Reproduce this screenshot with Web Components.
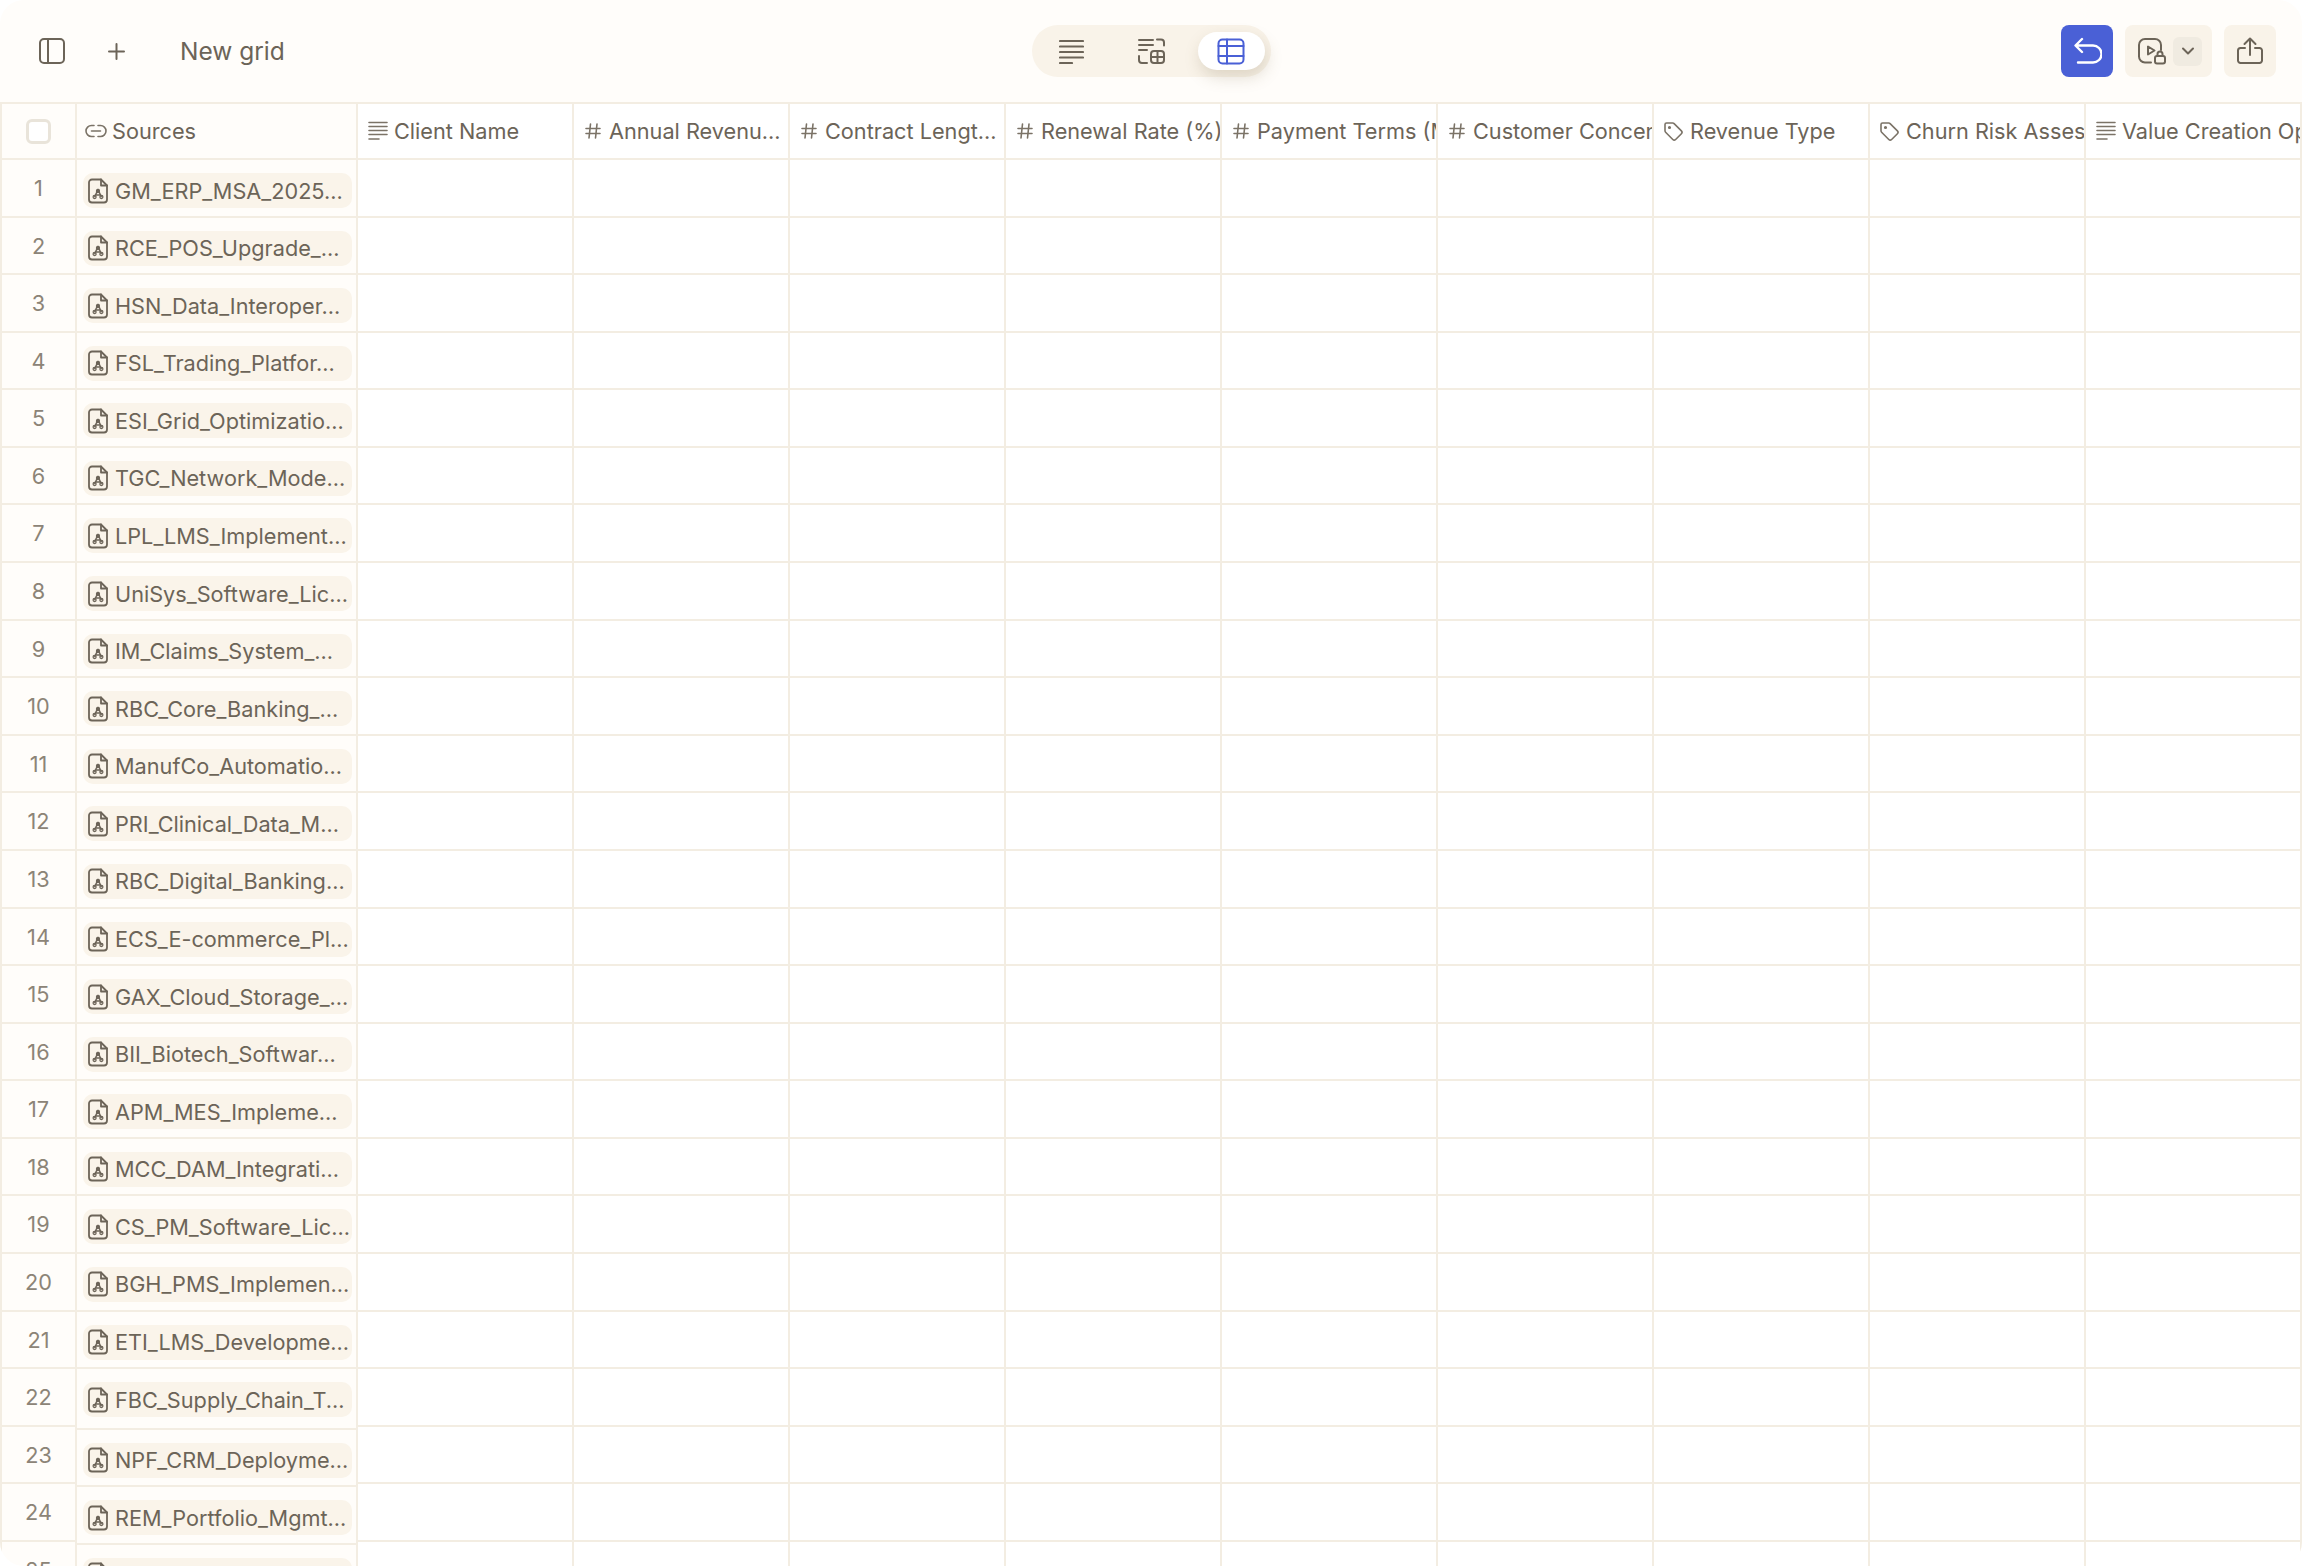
<!DOCTYPE html>
<html lang="en">
<head>
<meta charset="utf-8">
<title>New grid</title>
<style>
  html, body { margin: 0; padding: 0; background: #fff; overflow: hidden; }
  body { font-family: Inter, "Liberation Sans", sans-serif; color: #6c6458; }
</style>
</head>
<body>
<app-window>
  <tool-bar slot="top" title-text="New grid"></tool-bar>
  <grid-table></grid-table>
</app-window>

<script>
// icon strokes, all in the currentColor of the host
const ICONS = {
  sidebar: [28, 28, '<rect x="2" y="2" width="24" height="24" rx="4"/><path d="M10 2v24"/>'],
  plus: [17, 17, '<path d="M8.5 1v15M1 8.5h15"/>'],
  lines: [25, 25, '<path d="M1 2h23M1 7.5h23M1 13h23M1 18.5h23M1 24h12"/>'],
  lines_sm: [20, 20, '<path d="M1 1.500h18M1 5.500h18M1 9.500h18M1 13.500h18M1 18h10"/>'],
  docgrid: [28, 26, '<path d="M2 2h14M2 7h14M2 12h8M20 1.5h4a3 3 0 0 1 3 3v3M2 18v4a3 3 0 0 0 3 3h5"/><rect x="14" y="13" width="13" height="12" rx="3"/><path d="M14 19h13M20.5 13v12"/>'],
  table: [28, 27, '<rect x="1.5" y="1.5" width="25" height="24" rx="4"/><path d="M1.5 8h25M1.5 18h25M10 1.5v24"/>'],
  undo: [30, 28, '<path d="M10 2 3.5 8.5 10 15M4 8.5h17a7.5 7.5 0 0 1 0 17H6"/>'],
  video: [30, 28, '<path d="M14 25.5H8a6 6 0 0 1-6-6V8a6 6 0 0 1 6-6h10a6 6 0 0 1 6 6v5"/><path d="M11 9.5v8l6.5-4z"/><rect x="18" y="19" width="10" height="7.5" rx="2"/><path d="M20.500 19v-2a2.500 2.500 0 0 1 5 0v2"/>'],
  chevron: [14, 9, '<path d="M2 1.5 7 6.5 12 1.5"/>'],
  share: [28, 28, '<path d="M14 18V2M8.5 7 14 1.5 19.5 7M9 11H4.5A2.5 2.5 0 0 0 2 13.5v10A2.5 2.5 0 0 0 4.5 26h19a2.5 2.5 0 0 0 2.5-2.5v-10a2.5 2.5 0 0 0-2.5-2.5H19"/>'],
  link: [22, 14, '<path d="M9 1.5H6.5a5.5 5.5 0 0 0 0 11H9M13 1.5h2.5a5.5 5.5 0 0 1 0 11H13M6.5 7h9"/>'],
  hash: [16, 16, '<path d="M5.5 1 4 15M12 1l-1.500 14M1 5.500h14M1 10.500h14"/>'],
  tag: [21, 21, '<path d="M2 3.500A1.500 1.500 0 0 1 3.500 2h6.200a2 2 0 0 1 1.400.6l7.300 7.300a2 2 0 0 1 0 2.800l-5.800 5.800a2 2 0 0 1-2.800 0L2.600 11.200a2 2 0 0 1-.6-1.400z"/><circle cx="6.500" cy="6.500" r=".8"/>'],
  pdf: [20, 26, '<path d="M13 1.500H4A3 3 0 0 0 1 4.500v17a3 3 0 0 0 3 3h12a3 3 0 0 0 3-3V7.500z"/><path d="M13 1.500v6h6"/><path d="M10 11.500 6.800 18.500M10 11.500l3.200 7M7.500 17h5" stroke-width="1.500"/><circle cx="6.600" cy="19" r="1.500" stroke-width="1.300"/><circle cx="13.400" cy="19" r="1.500" stroke-width="1.300"/><circle cx="10" cy="13" r="1.500" stroke-width="1.300"/>']
};

class UiIcon extends HTMLElement {
  connectedCallback() {
    const [w, h, body] = ICONS[this.getAttribute('name')];
    const sw = this.getAttribute('stroke') || 2;
    this.attachShadow({mode: 'open'}).innerHTML = `
      <style>:host { display: inline-flex; flex: none; line-height: 0; } svg { display: block; }</style>
      <svg width="${w}" height="${h}" viewBox="0 0 ${w} ${h}" fill="none" stroke="currentColor"
        stroke-width="${sw}" stroke-linecap="round" stroke-linejoin="round">${body}</svg>`;
  }
}

class AppWindow extends HTMLElement {
  constructor() {
    super();
    this.attachShadow({mode: 'open'}).innerHTML = `
      <style>
        :host { display: block; height: 1566px; border-radius: 24px; overflow: hidden; background: #fffdfa; }
      </style>
      <slot name="top"></slot>
      <slot></slot>`;
  }
}

class ViewSwitch extends HTMLElement {
  constructor() {
    super();
    this.attachShadow({mode: 'open'}).innerHTML = `
      <style>
        :host { display: inline-flex; box-sizing: border-box; width: 239px; height: 52px; padding: 7px 6px; gap: 13px;
          background: #f9f3e9; border-radius: 26px; color: #6c6458; }
        span { width: 67px; display: flex; align-items: center; justify-content: center; border-radius: 19px; }
        .on { background: #fff; color: #4a60d6; box-shadow: 2px 7px 16px rgba(125, 105, 70, .22); }
      </style>
      <span><ui-icon name="lines" stroke="2.200"></ui-icon></span>
      <span><ui-icon name="docgrid"></ui-icon></span>
      <span class="on"><ui-icon name="table"></ui-icon></span>`;
  }
}

class ToolBar extends HTMLElement {
  constructor() {
    super();
    this.attachShadow({mode: 'open'}).innerHTML = `
      <style>
        :host { display: grid; grid-template-columns: 1fr auto 1fr; align-items: center; height: 102px; color: #6c6458; }
        .left { display: flex; align-items: center; padding-left: 38px; }
        .plus { margin-left: 42px; }
        .name { margin-left: 55px; font-size: 24.500px; line-height: 30px; }
        .right { display: flex; justify-content: flex-end; gap: 12px; padding-right: 26px; }
        .btn { display: flex; align-items: center; justify-content: center; height: 52px; width: 52px;
          border-radius: 8px; background: #f9f3e9; box-sizing: border-box; }
        .back { background: #4a60d6; color: #fff; }
        .video { width: 87px; justify-content: flex-start; padding-left: 12px; }
        .drop { display: flex; align-items: center; justify-content: center; width: 29px; height: 29px; margin-left: 6px;
          background: #f0ebe1; border-radius: 6px; }
      </style>
      <div class="left">
        <ui-icon name="sidebar"></ui-icon>
        <ui-icon class="plus" name="plus"></ui-icon>
        <span class="name">${this.getAttribute('title-text')}</span>
      </div>
      <view-switch></view-switch>
      <div class="right">
        <div class="btn back"><ui-icon name="undo" stroke="2.400"></ui-icon></div>
        <div class="btn video"><ui-icon name="video"></ui-icon><div class="drop"><ui-icon name="chevron"></ui-icon></div></div>
        <div class="btn"><ui-icon name="share"></ui-icon></div>
      </div>`;
  }
}

class ColHead extends HTMLElement {
  connectedCallback() {
    const icon = this.getAttribute('icon');
    // each icon kind has its own inset and gap in the reference
    const [pad, gap] = {lines_sm: [10, 6], hash: [11, 8], tag: [9, 6], link: [8, 5]}[icon];
    this.attachShadow({mode: 'open'}).innerHTML = `
      <style>
        :host { display: flex; align-items: center; gap: ${gap}px; box-sizing: border-box; height: 58px; padding-left: ${pad}px;
          font-size: 21.700px; white-space: nowrap; overflow: hidden; background: #fff;
          border-top: 2px solid #f3ede2; border-bottom: 2px solid #f3ede2; border-right: 2px solid #f3ede2; }
        :host([frozen]) { background: #fffdfa; }
        ui-icon { color: #7b7367; }
      </style>
      <ui-icon name="${icon}" stroke="1.600"></ui-icon><slot></slot>`;
  }
}

class SourceChip extends HTMLElement {
  constructor() {
    super();
    this.attachShadow({mode: 'open'}).innerHTML = `
      <style>
        :host { display: flex; align-items: center; box-sizing: border-box; width: 269px; height: 35px; gap: 7px; padding-left: 5px;
          margin-left: 6px; background: #faf4ea; border-radius: 10px; font-size: 21.700px; white-space: nowrap; overflow: hidden; }
      </style>
      <ui-icon name="pdf" stroke="1.800"></ui-icon><slot></slot>`;
  }
}

class GridTable extends HTMLElement {
  constructor() {
    super();
    const sources = ['GM_ERP_MSA_2025...', 'RCE_POS_Upgrade_...', 'HSN_Data_Interoper...', 'FSL_Trading_Platfor...',
      'ESI_Grid_Optimizatio...', 'TGC_Network_Mode...', 'LPL_LMS_Implement...', 'UniSys_Software_Lic...',
      'IM_Claims_System_...', 'RBC_Core_Banking_...', 'ManufCo_Automatio...', 'PRI_Clinical_Data_M...',
      'RBC_Digital_Banking...', 'ECS_E-commerce_Pl...', 'GAX_Cloud_Storage_...', 'BII_Biotech_Softwar...',
      'APM_MES_Impleme...', 'MCC_DAM_Integrati...', 'CS_PM_Software_Lic...', 'BGH_PMS_Implemen...',
      'ETI_LMS_Developme...', 'FBC_Supply_Chain_T...', 'NPF_CRM_Deployme...', 'REM_Portfolio_Mgmt...', ''];
    const cols = [['lines_sm', 'Client Name'], ['hash', 'Annual Revenu...'], ['hash', 'Contract Lengt...'],
      ['hash', 'Renewal Rate (%)'], ['hash', 'Payment Terms (M'], ['hash', 'Customer Concen'],
      ['tag', 'Revenue Type'], ['tag', 'Churn Risk Asses'], ['lines_sm', 'Value Creation Opp']];

    const nums = sources.map((s, i) => `<div class="num">${i + 1}</div>`).join('');
    // row 22 of the frozen column sits 3px taller in the reference, the rows below it follow
    const srcs = sources.map((s, i) =>
      `<div class="src${i === 21 ? ' tall' : ''}"><source-chip>${s}</source-chip></div>`).join('');
    const heads = cols.map(c => `<col-head icon="${c[0]}">${c[1]}</col-head>`).join('');
    const blanks = sources.map(() => '<div class="row">' + cols.map(() => '<div class="cell"></div>').join('') + '</div>').join('');

    this.attachShadow({mode: 'open'}).innerHTML = `
      <style>
        :host { display: grid; grid-template-columns: 77px 281px 1944px; align-items: start; }
        .col-num { border-left: 2px solid #f3ede2; }
        .corner { box-sizing: border-box; height: 58px; display: flex; align-items: center; justify-content: center;
          border-top: 2px solid #f3ede2; border-bottom: 2px solid #f3ede2; border-right: 2px solid #f3ede2; }
        .check { width: 25px; height: 25px; box-sizing: border-box; border: 3px solid #e9e4da; border-radius: 6px; background: #fff; }
        .num, .src, .cell { box-sizing: border-box; height: 57.58px; border-bottom: 2px solid #f3ede2; border-right: 2px solid #f3ede2; }
        .num { display: flex; align-items: flex-start; justify-content: center; padding-top: 15px; font-size: 21.700px; line-height: 27px; color: #8c8477; }
        .src { padding-top: 13px; }
        .src.tall { height: 60.6px; }
        .data { background: #fff; }
        .heads, .row { display: grid; grid-template-columns: repeat(9, 216px); }
      </style>
      <div class="col-num"><div class="corner"><div class="check"></div></div>${nums}</div>
      <div class="col-src"><col-head frozen icon="link">Sources</col-head>${srcs}</div>
      <div class="data"><div class="heads">${heads}</div>${blanks}</div>`;
  }
}

customElements.define('ui-icon', UiIcon);
customElements.define('app-window', AppWindow);
customElements.define('view-switch', ViewSwitch);
customElements.define('tool-bar', ToolBar);
customElements.define('col-head', ColHead);
customElements.define('source-chip', SourceChip);
customElements.define('grid-table', GridTable);
</script>
</body>
</html>
